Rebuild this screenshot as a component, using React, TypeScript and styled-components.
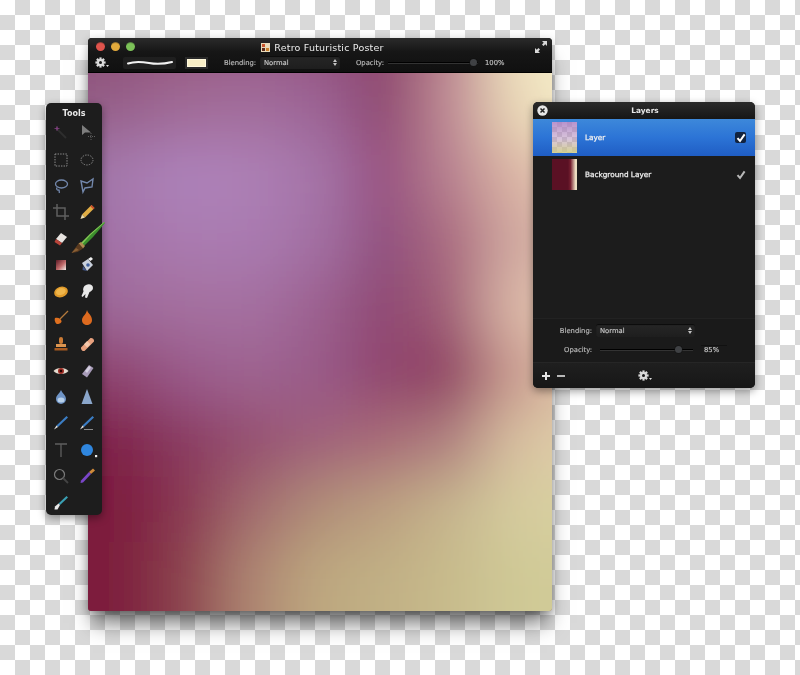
import React from "react";
import styled, { createGlobalStyle } from "styled-components";

const Global = createGlobalStyle`
  html, body { margin: 0; padding: 0; background: #fff; }
  body { font-family: "DejaVu Sans", "Liberation Sans", sans-serif; overflow: hidden; }
  svg { display: block; }
`;

const Desktop = styled.div`
  position: relative;
  width: 800px;
  height: 675px;
  overflow: hidden;
  background-image: conic-gradient(#d9d9d9 25%, #fff 0 50%, #d9d9d9 0 75%, #fff 0);
  background-size: 30px 30px;
`;

const Soft = styled.div`
  display: contents;
  & > * { filter: blur(0.35px); }
`;

const DocWindow = styled.section`
  position: absolute;
  left: 88px;
  top: 38px;
  width: 464px;
  height: 573px;
  display: flex;
  flex-direction: column;
  border-radius: 4px;
  background: #111;
  box-shadow: 0 17px 20px -5px rgba(0, 0, 0, 0.55), 0 2px 8px rgba(0, 0, 0, 0.25);
`;

const DocChrome = styled.header`
  height: 35px;
  flex: none;
  display: flex;
  flex-direction: column;
  border-radius: 4px 4px 0 0;
  background: linear-gradient(#2b2b2b, #161616 40%, #101010);
  border-bottom: 1px solid #000;
  box-sizing: border-box;
`;

const TitleRow = styled.div`
  position: relative;
  height: 17px;
  flex: none;
  display: flex;
  align-items: center;
  justify-content: center;
`;

const Lights = styled.div`
  position: absolute;
  left: 8px;
  top: 4px;
  display: flex;
  gap: 6px;
`;

const Light = styled.span<{ $c: string }>`
  width: 9px;
  height: 9px;
  border-radius: 50%;
  background: radial-gradient(circle at 50% 70%, ${(p) => p.$c}, ${(p) => p.$c} 60%, rgba(0,0,0,.35));
`;

const DocTitle = styled.h1`
  margin: 1px 0 0 5px;
  display: flex;
  align-items: center;
  gap: 4px;
  font-size: 9.5px;
  font-weight: 400;
  letter-spacing: 0.2px;
  color: #ececec;
  white-space: nowrap;
`;

const ExpandSlot = styled.div`
  position: absolute;
  right: 4px;
  top: 2px;
  width: 14px;
  height: 14px;
`;

const ToolRow = styled.div`
  height: 15px;
  display: flex;
  align-items: center;
  padding-left: 7px;
`;

const Label = styled.span<{ $w?: number }>`
  font-size: 6.8px;
  font-weight: 400;
  color: #bcbcbc;
  -webkit-text-stroke: 0.15px #bcbcbc;
  white-space: nowrap;
  text-align: right;
  flex: none;
  ${(p) => (p.$w ? `width: ${p.$w}px;` : "")}
`;

const ToolLabel = styled(Label)`
  width: 31px;
  margin-right: 5px;
`;

const OpacityLabel = styled(Label)`
  width: 27px;
  margin: 0 5px 0 16px;
`;

const StrokeWell = styled.div`
  width: 53px;
  height: 12px;
  margin-left: 13px;
  flex: none;
  background: #1f1f1f;
  border-radius: 2px;
  display: flex;
  align-items: center;
  justify-content: center;
`;

const Swatch = styled.div`
  width: 23px;
  height: 12px;
  margin-left: 9px;
  margin-right: 16px;
  flex: none;
  box-sizing: border-box;
  border: 2px solid #2a2a2a;
  background: #f8eec6;
  box-shadow: inset 0 0 0 1px #fff8dc;
`;

const SelectBox = styled.div<{ $w: number }>`
  width: ${(p) => p.$w}px;
  height: 13px;
  flex: none;
  box-sizing: border-box;
  padding: 0 3px 0 4px;
  display: flex;
  align-items: center;
  justify-content: space-between;
  border-radius: 2px;
  background: linear-gradient(#262626, #1e1e1e);
  box-shadow: inset 0 1px 1px #0b0b0b;
  font-size: 6.8px;
  color: #c8c8c8;
  -webkit-text-stroke: 0.15px #c8c8c8;
`;

const Steppers = styled.span`
  display: flex;
  flex-direction: column;
  gap: 1px;
  & i {
    display: block;
    width: 0;
    height: 0;
    border-left: 2px solid transparent;
    border-right: 2px solid transparent;
  }
  & i:first-child { border-bottom: 3px solid #c4c4c4; }
  & i:last-child { border-top: 3px solid #c4c4c4; }
`;

const Track = styled.div<{ $w: number; $at: number }>`
  position: relative;
  width: ${(p) => p.$w}px;
  height: 1px;
  flex: none;
  background: #000;
  box-shadow: 0 1px 0 #333;
  &::after {
    content: "";
    position: absolute;
    left: ${(p) => p.$at}px;
    top: -3px;
    width: 7px;
    height: 7px;
    border-radius: 50%;
    background: #3f4144;
    box-shadow: 0 0 0 0.5px #111;
  }
`;

const Value = styled.span`
  margin-left: 7px;
  font-size: 6.8px;
  color: #c0c0c0;
  -webkit-text-stroke: 0.15px #c0c0c0;
`;

const Painting = styled.div`
  flex: 1;
  overflow: hidden;
  border-radius: 0 0 3px 3px;
  background: #b08a90;
`;

const Panel = styled.aside`
  position: absolute;
  display: flex;
  flex-direction: column;
  background: #1b1b1b;
  border-radius: 5px;
  box-shadow: 0 3px 8px rgba(0, 0, 0, 0.4);
`;

const ToolsPanel = styled(Panel)`
  left: 46px;
  top: 103px;
  width: 56px;
  height: 412px;
  padding-top: 1px;
  box-sizing: border-box;
  background: #1d1d1d;
  align-items: center;
`;

const PanelTitle = styled.h2<{ $size: number }>`
  margin: 0;
  height: 18px;
  flex: none;
  display: flex;
  align-items: center;
  justify-content: center;
  font-size: ${(p) => p.$size}px;
  font-weight: 700;
  color: #e8e8e8;
`;

const ToolGrid = styled.div`
  display: grid;
  margin-top: -2px;
  width: 52px;
  grid-template-columns: 26px 26px;
  grid-auto-rows: 26.4px;
  place-items: center;
`;

const ToolIcon = styled.svg`
  width: 22px;
  height: 22px;
  overflow: visible;
`;

const LayersPanel = styled(Panel)`
  left: 533px;
  top: 102px;
  width: 222px;
  height: 286px;
`;

const LayersHead = styled.header`
  position: relative;
  height: 17px;
  flex: none;
  display: flex;
  align-items: center;
  justify-content: center;
  padding-left: 2px;
  border-radius: 5px 5px 0 0;
  background: linear-gradient(#2a2a2a, #161616);
`;

const CloseSlot = styled.div`
  position: absolute;
  left: 4px;
  top: 3px;
  width: 11px;
  height: 11px;
`;

const LayerList = styled.ul`
  list-style: none;
  margin: 0;
  padding: 0;
  flex: 1;
  background: #1c1c1c;
`;

const LayerRow = styled.li<{ $on?: boolean }>`
  height: 37px;
  display: flex;
  align-items: center;
  padding: 0 9px 0 19px;
  background: ${(p) => (p.$on ? "linear-gradient(#3d88da, #2c74d6 50%, #1f5dc4)" : "transparent")};
`;

const Thumb = styled.div<{ $kind: "layer" | "bg" }>`
  width: 25px;
  height: 31px;
  flex: none;
  background: ${(p) =>
    p.$kind === "layer"
      ? `linear-gradient(180deg, rgba(172,128,196,.85), rgba(186,150,190,.55) 55%, rgba(206,202,130,.85)),
         conic-gradient(#cfcfcf 25%, #fff 0 50%, #cfcfcf 0 75%, #fff 0) 0 0 / 10px 10px`
      : "linear-gradient(90deg, #5a1124 0 64%, #762030 74%, #ecdcc0 94%)"};
`;

const LayerName = styled.span`
  margin-left: 8px;
  flex: 1;
  font-size: 7.3px;
  color: #f0f0f0;
  -webkit-text-stroke: 0.25px #f0f0f0;
`;

const CheckBox = styled.div<{ $on?: boolean }>`
  width: 11px;
  height: 11px;
  flex: none;
  border-radius: 2px;
  background: ${(p) => (p.$on ? "#12233f" : "transparent")};
  display: flex;
  align-items: center;
  justify-content: center;
`;

const Settings = styled.div`
  height: 44px;
  flex: none;
  box-sizing: border-box;
  display: flex;
  flex-direction: column;
  justify-content: space-between;
  padding: 5px 0 6px;
  background: #1a1a1a;
  border-top: 1px solid #222;
`;

const SettingRow = styled.div`
  display: flex;
  align-items: center;
  height: 13px;
  gap: 4px;
`;

const SettingTrack = styled(Track)`
  margin-left: 4px;
`;

const OpacityValue = styled.span`
  box-sizing: border-box;
  width: 26px;
  margin-left: 4px;
  padding-left: 3px;
  flex: none;
  font-size: 6.8px;
  color: #c8c8c8;
  -webkit-text-stroke: 0.15px #c8c8c8;
  border-top: 1px solid #111;
`;

const Footer = styled.footer`
  height: 26px;
  flex: none;
  display: grid;
  grid-template-columns: 96px 22px 1fr;
  align-items: center;
  padding-left: 9px;
  box-sizing: border-box;
  border-top: 1px solid #262626;
  border-radius: 0 0 5px 5px;
  background: linear-gradient(#1f1f1f, #171717);
`;

const AddRemove = styled.div`
  display: flex;
  gap: 7px;
  align-items: center;
`;

const Gear = ({ size = 11 }: { size?: number }) => (
  <svg width={size + 4} height={size} viewBox="0 0 15 11">
    <g fill="#dcdcdc">
      <circle cx="5.5" cy="5.5" r="3.4" />
      {[0, 45, 90, 135].map((a) => (
        <rect key={a} x="4.4" y="0.4" width="2.2" height="10.2" transform={`rotate(${a} 5.5 5.5)`} />
      ))}
      <path d="M11 8h3l-1.5 2z" />
    </g>
    <circle cx="5.5" cy="5.5" r="1.5" fill="#1a1a1a" />
  </svg>
);

const Check = ({ c }: { c: string }) => (
  <svg width="10" height="10" viewBox="0 0 10 10">
    <path d="M1.5 5.2 4 8 8.6 1.4" fill="none" stroke={c} strokeWidth="2" />
  </svg>
);

const dotted = { fill: "none", stroke: "#8d8d8d", strokeWidth: 1, strokeDasharray: "1.4 1.2" };

const pen = (a: string, b: string) => (
  <g>
    <path d="M16.5 4 18 5.5 8 15 6.5 13.5Z" fill={a} />
    <path d="M6.5 13.5 8 15 4 17.5Z" fill={b} />
  </g>
);

const icons: React.ReactNode[] = [
  <g key="wand">
    <path d="M7 7 16 16" stroke="#2e2e2e" strokeWidth="2" />
    <path d="M7 4v5M4.500 6.500h5" stroke="#6a3a6a" strokeWidth="1" />
    <circle cx="7" cy="6.500" r="1.200" fill="#7f3f7d" />
  </g>,
  <g key="arrow">
    <path d="M6 3 6 13 9 10.500 15 10.500Z" fill="#7d7d7d" />
    <path d="M15 11v7M12 14.500h7" stroke="#5f5f5f" strokeWidth="1" strokeDasharray="1 1" />
  </g>,
  <rect key="rm" x="5" y="5" width="12" height="12" {...dotted} />,
  <ellipse key="em" cx="11" cy="11" rx="6" ry="5" {...dotted} />,
  <g key="lasso" fill="none" stroke="#7388ad" strokeWidth="1.300">
    <ellipse cx="11.500" cy="9" rx="6" ry="4" />
    <path d="M7 12.500c-1 2 .5 3 1.500 2.500 1-.6.5 2 1 3" />
  </g>,
  <g key="poly" fill="none" stroke="#7388ad" strokeWidth="1.400">
    <path d="M5 6 11 8 17 4 16 12 9 13 7 17Z" />
  </g>,
  <g key="crop" fill="none" stroke="#5f5f5f" strokeWidth="1.500">
    <path d="M7 3v12h12M3 7h12v12" />
  </g>,
  <g key="pencil">
    <path d="M15.500 4 18.500 7 9 16.500 6 13.500Z" fill="#e0ae45" />
    <path d="M6 13.500 9 16.500 4.500 18Z" fill="#f0e0b0" />
    <path d="M15.500 4 18.500 7 17.400 8.200 14.300 5.200Z" fill="#c9482c" />
  </g>,
  <g key="eraser">
    <path d="M11 5 17 9 12 15 6 11Z" fill="#e8e4e0" />
    <path d="M6 11 12 15 10 17.500 4.500 14Z" fill="#b9443a" />
  </g>,
  <g key="brush">
    <path d="M5 15 14 6 28 -6 29 -5 17 9 8 18Z" fill="#3c8f2e" />
    <path d="M5 15 14 6 28 -6 28.500 -5.500 14.500 7 6.500 16Z" fill="#86c655" />
    <path d="M2.500 15.500 5 14 9 18 7 20.500Z" fill="#b08a50" />
    <path d="M2.500 15.500 7 20.500 1.500 24 -4.500 25Z" fill="#5a3a1f" />
    <path d="M0 20 3 22 -4.500 25Z" fill="#8a6035" />
  </g>,
  <g key="grad">
    <defs>
      <linearGradient id="gr1" x1="0" y1="0" x2="1" y2="1">
        <stop offset="0" stopColor="#5b1a26" />
        <stop offset=".55" stopColor="#c06a6a" />
        <stop offset="1" stopColor="#f2f0ea" />
      </linearGradient>
    </defs>
    <rect x="6" y="6" width="10" height="10" fill="url(#gr1)" />
  </g>,
  <g key="bucket">
    <path d="M6 9 12 5 17 11 11 17Z" fill="#c9d0dc" />
    <path d="M7 12 11 17 6.500 16Z" fill="#40568a" />
    <path d="M12 5 15 3 17 5 14.500 7Z" fill="#f2f2f2" />
    <circle cx="12" cy="11" r="1.800" fill="#3f5f9e" />
  </g>,
  <g key="coin">
    <ellipse cx="11" cy="11" rx="7" ry="5.200" fill="#e09a2a" transform="rotate(-18 11 11)" />
    <ellipse cx="11" cy="10.500" rx="5" ry="3.400" fill="#efb54a" transform="rotate(-18 11 11)" />
  </g>,
  <g key="finger">
    <path d="M10 4c3-1.500 7-.5 7 3 0 2-2 3.500-3.500 4L11 17l-2-.5L9.500 13 6.500 16 5.500 15l2-4.500C6.500 8 7.500 5 10 4Z" fill="#e8e8e8" />
  </g>,
  <g key="broom">
    <path d="M10 12 18 4" stroke="#b47a3c" strokeWidth="1.200" />
    <path d="M5 11c3-1 6 .5 6.500 3 .3 2-3 3.500-4.500 3S4 13 5 11Z" fill="#e0701f" />
  </g>,
  <path key="flame" d="M11 3c.5 3 5 5 5 10 0 3.200-2.400 5-5 5s-5-1.800-5-5c0-3.500 4-5 5-10Z" fill="#dd6a1f" />,
  <g key="stamp" fill="#cc7b35">
    <rect x="9" y="4" width="4" height="7" rx="2" />
    <rect x="6" y="11" width="10" height="3" fill="#dc9550" />
    <rect x="4.500" y="15" width="13" height="2.500" fill="#a85a20" />
  </g>,
  <g key="band">
    <path d="M5 14.500 14.500 5a3 3 0 0 1 3.500 3.500L8.500 18A3 3 0 0 1 5 14.500Z" fill="#e8a17e" />
    <rect x="9" y="9" width="4.500" height="4.500" fill="#f4c9ad" transform="rotate(45 11.200 11.200)" />
  </g>,
  <g key="eye">
    <path d="M3.500 11c3-4 12-4 15 0-3 4-12 4-15 0Z" fill="#e6dcd0" />
    <circle cx="11" cy="11" r="3" fill="#9a2a22" />
    <circle cx="11" cy="11" r="1.300" fill="#200" />
  </g>,
  <g key="sponge">
    <path d="M6 14 13 5 17.500 8 11 17.500Z" fill="#a79bb8" />
    <path d="M9 11 13 6 15 7.500 11 13Z" fill="#d4cfe0" />
  </g>,
  <g key="drop">
    <path d="M11 4c1.500 3.500 5 5.500 5 9a5 5 0 0 1-10 0c0-3.500 3.500-5.500 5-9Z" fill="#6f94c6" />
    <ellipse cx="11" cy="14" rx="3.500" ry="2.500" fill="#b8d0ea" />
  </g>,
  <path key="cone" d="M11 3 16.500 18H5.500Z" fill="#8aa6cb" />,
  pen("#3b7dc4", "#e6e6e6"),
  <g key="pen2">
    {pen("#3b7dc4", "#e6e6e6")}
    <path d="M8 17.500h9" stroke="#8a8a8a" strokeWidth="1" />
  </g>,
  <path key="t" d="M5 5h12M11 5v13" stroke="#5f5f5f" strokeWidth="1.300" fill="none" />,
  <g key="shape">
    <circle cx="11" cy="11" r="6" fill="#2f86de" />
    <rect x="19" y="16" width="2.200" height="2.200" fill="#eee" />
  </g>,
  <g key="zoom" fill="none" stroke="#7c7c7c">
    <circle cx="9.500" cy="9.500" r="5" strokeWidth="1.200" />
    <path d="M13 13 18 18" strokeWidth="1.800" stroke="#444" />
  </g>,
  <g key="dropper">
    <path d="M13 7 17 3.500 19 5.500 15 9Z" fill="#cf8a3a" />
    <path d="M13 7 15 9 7 17.500 4.500 18 5 15.500Z" fill="#7a46c8" />
  </g>,
  <g key="pick">
    <path d="M16.500 4 18 5.500 10 13 8.500 11.500Z" fill="#3aa0b4" />
    <path d="M8.500 11.500 10 13 7.500 17.500 4.500 17.500 5 14.500Z" fill="#e8e8e8" />
  </g>,
];

const colors = [
  ["#8b4f78", "#8f5078", "#96587f", "#985a85", "#93527f", "#8c426c", "#bb8490", "#f0e2c0", "#f8f0cc"],
  ["#8f5a80", "#97608a", "#a06a95", "#a26d9b", "#9c6394", "#8e4670", "#c08a95", "#ead9b8", "#f7efca"],
  ["#9a6ca0", "#a67aad", "#ad82bb", "#ad80b5", "#a574a8", "#984f80", "#b88190", "#dcb5a5", "#e8d0b8"],
  ["#9a6a9f", "#a473a8", "#aa7bb0", "#a97ab0", "#a36fa3", "#904f7e", "#aa6a80", "#d0a8a0", "#dcbca8"],
  ["#955c8e", "#9f6a9a", "#a4709f", "#a46fa0", "#9c608f", "#8e4672", "#a26078", "#dcb9a8", "#e8ccb4"],
  ["#88386a", "#8f456f", "#9a5a8a", "#9e6490", "#985a88", "#90446d", "#8f3f62", "#c99a90", "#e0c4a8"],
  ["#7c1f47", "#7f2148", "#8a3a60", "#95506f", "#a0607a", "#a86b78", "#b08080", "#d8c0a0", "#e0d0aa"],
  ["#7b1c3c", "#7d1c3d", "#8a3852", "#a26a6e", "#b08d78", "#bb9f80", "#c6b58e", "#d5cc9e", "#d8d0a0"],
  ["#7c1e3d", "#7d1f3e", "#8d4250", "#ae8572", "#bda77f", "#c1b085", "#c8bb8c", "#cfc996", "#d2cc98"],
  ["#7c1e3d", "#7d1f3e", "#8d4250", "#ae8572", "#bda77f", "#c1b085", "#c8bb8c", "#cfc996", "#d2cc98"],
];

const PaintingArt = () => (
  <svg width="464" height="538" viewBox="0 0 464 538">
    <defs>
      <filter id="soft" x="-10%" y="-10%" width="120%" height="120%">
        <feGaussianBlur stdDeviation="28" />
      </filter>
    </defs>
    <g filter="url(#soft)">
      {colors.map((row, r) =>
        row.map((c, i) => (
          <rect key={`${r}-${i}`} x={i * 66 - 66} y={r * 67 - 67} width="67" height="68" fill={c} />
        ))
      )}
    </g>
  </svg>
);

export default function App() {
  return (
    <>
      <Global />
      <Desktop>
        <Soft>
          <DocWindow>
            <DocChrome>
              <TitleRow>
                <Lights>
                  <Light $c="#e0544c" />
                  <Light $c="#e3aa3c" />
                  <Light $c="#7cc258" />
                </Lights>
                <DocTitle>
                  <svg width="9" height="9" viewBox="0 0 9 9">
                    <rect width="9" height="9" fill="#e8d9b8" />
                    <rect x="1" y="1" width="3" height="3" fill="#c9552c" />
                    <rect x="5" y="5" width="3" height="3" fill="#c9802c" />
                    <rect x="1" y="5" width="3" height="3" fill="#5a2a1a" />
                  </svg>
                  Retro Futuristic Poster
                </DocTitle>
                <ExpandSlot>
                  <svg width="14" height="14" viewBox="0 0 14 14" fill="#d8d8d8">
                    <path d="M8 1h5v5l-1.700-1.700L9.500 6 8 4.500 9.700 2.700Z" />
                    <path d="M6 13H1V8l1.700 1.700L4.500 8 6 9.500 4.300 11.300Z" />
                  </svg>
                </ExpandSlot>
              </TitleRow>
              <ToolRow>
                <Gear />
                <StrokeWell>
                  <svg width="46" height="6" viewBox="0 0 46 6">
                    <path d="M1 3.500C8 1 14 1.500 22 3s15 1 23-1" fill="none" stroke="#f2f2f2" strokeWidth="2" strokeLinecap="round" />
                  </svg>
                </StrokeWell>
                <Swatch />
                <ToolLabel>Blending:</ToolLabel>
                <SelectBox $w={80}>
                  Normal
                  <Steppers><i /><i /></Steppers>
                </SelectBox>
                <OpacityLabel>Opacity:</OpacityLabel>
                <Track $w={90} $at={82} />
                <Value>100%</Value>
              </ToolRow>
            </DocChrome>
            <Painting>
              <PaintingArt />
            </Painting>
          </DocWindow>

          <ToolsPanel>
            <PanelTitle $size={8}>Tools</PanelTitle>
            <ToolGrid>
              {icons.map((icon, i) => (
                <ToolIcon key={i} viewBox="0 0 22 22">
                  {icon}
                </ToolIcon>
              ))}
            </ToolGrid>
          </ToolsPanel>

          <LayersPanel>
            <LayersHead>
              <CloseSlot>
                <svg width="11" height="11" viewBox="0 0 11 11">
                  <circle cx="5.500" cy="5.500" r="5.200" fill="#e6e6e6" />
                  <path d="M3.500 3.500l4 4M7.500 3.500l-4 4" stroke="#222" strokeWidth="1.500" />
                </svg>
              </CloseSlot>
              <PanelTitle $size={7.4}>Layers</PanelTitle>
            </LayersHead>
            <LayerList>
              <LayerRow $on>
                <Thumb $kind="layer" />
                <LayerName>Layer</LayerName>
                <CheckBox $on><Check c="#fff" /></CheckBox>
              </LayerRow>
              <LayerRow>
                <Thumb $kind="bg" />
                <LayerName>Background Layer</LayerName>
                <CheckBox><Check c="#b8b8b8" /></CheckBox>
              </LayerRow>
            </LayerList>
            <Settings>
              <SettingRow>
                <Label $w={59}>Blending:</Label>
                <SelectBox $w={99}>
                  Normal
                  <Steppers><i /><i /></Steppers>
                </SelectBox>
              </SettingRow>
              <SettingRow>
                <Label $w={59}>Opacity:</Label>
                <SettingTrack $w={93} $at={75} />
                <OpacityValue>85%</OpacityValue>
              </SettingRow>
            </Settings>
            <Footer>
              <AddRemove>
                <svg width="8" height="8" viewBox="0 0 8 8"><path d="M4 0v8M0 4h8" stroke="#e4e4e4" strokeWidth="2" /></svg>
                <svg width="8" height="8" viewBox="0 0 8 8"><path d="M0 4h8" stroke="#b8b8b8" strokeWidth="2" /></svg>
              </AddRemove>
              <Gear />
            </Footer>
          </LayersPanel>
        </Soft>
      </Desktop>
    </>
  );
}
